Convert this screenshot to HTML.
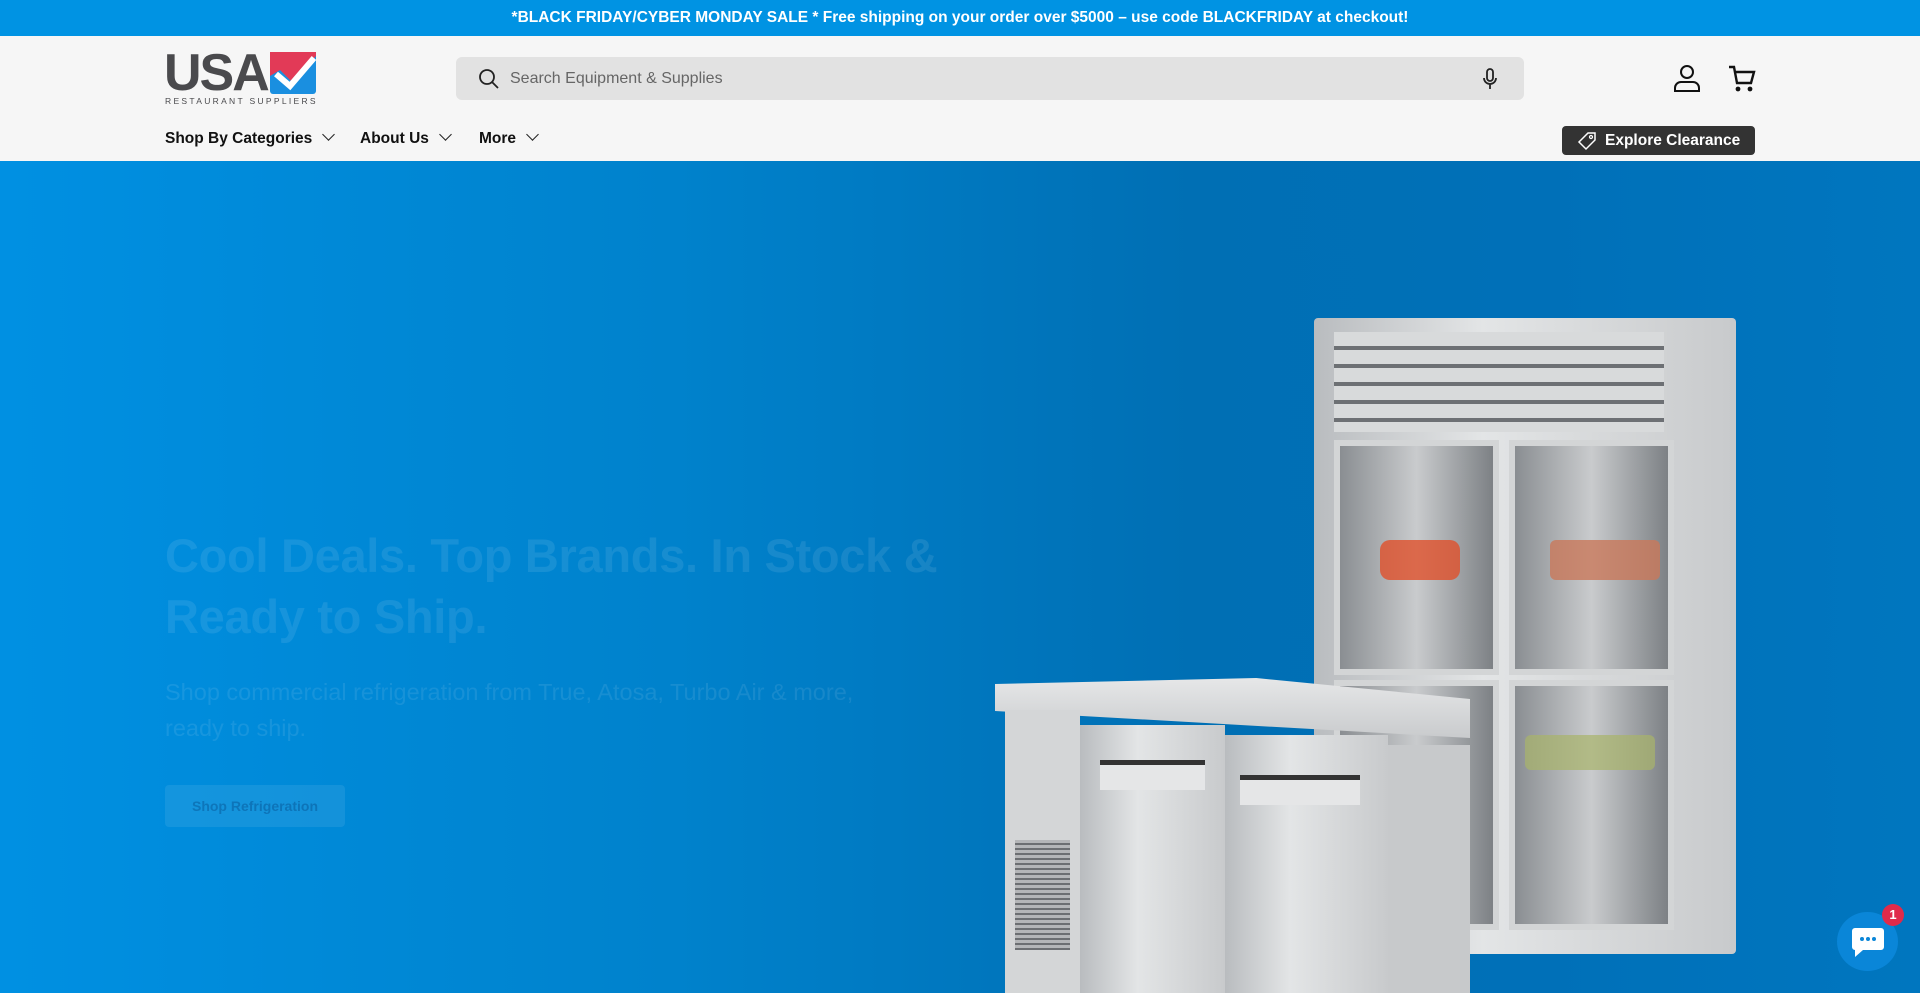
<!DOCTYPE html>
<html><head><meta charset="utf-8"><style>
*{margin:0;padding:0;box-sizing:border-box}
body{width:1920px;height:993px;overflow:hidden;font-family:"Liberation Sans",sans-serif;background:#0088d6;position:relative}
.top{height:36px;background:#0093e3;color:#fff;font-weight:bold;font-size:15.5px;text-align:center;line-height:36px}
.hdr{position:absolute;top:36px;left:0;width:1920px;height:125px;background:#f6f6f6}
.hero{position:absolute;top:161px;left:0;width:1920px;height:832px;background:linear-gradient(90deg,#0090e2 0%,#0082cc 35%,#006fb4 62%,#0070b8 80%,#0076bf 100%)}
.abs{position:absolute}
.nav{position:absolute;top:130px;font-size:15.5px;font-weight:bold;color:#111}
.chev{display:inline-block;width:9px;height:9px;border-right:1.6px solid #222;border-bottom:1.6px solid #222;transform:rotate(45deg);margin-left:12px;position:relative;top:-4px}
.steel{background:linear-gradient(90deg,#b9bcbf,#e3e5e6 40%,#c8cacc)}
</style></head><body>
<div class="top">*BLACK FRIDAY/CYBER MONDAY SALE * Free shipping on your order over $5000 – use code BLACKFRIDAY at checkout!</div>
<div class="hdr"></div>
<!-- logo -->
<div class="abs" style="left:164px;top:48px;font-size:52px;font-weight:bold;color:#4a4a4d;letter-spacing:-2px;line-height:50px">USA</div>
<svg class="abs" style="left:270px;top:52px" width="46" height="42" viewBox="0 0 46 42"><rect width="46" height="42" rx="3" fill="#1a8fe0"/><polygon points="0,0 46,0 46,4 22,30 10,18 0,24" fill="#e23a57"/><polyline points="6,22 20,34 44,6" fill="none" stroke="#fff" stroke-width="6"/></svg>
<div class="abs" style="left:165px;top:96px;font-size:8.5px;letter-spacing:2.3px;color:#4a4a4d">RESTAURANT SUPPLIERS</div>
<!-- search -->
<div class="abs" style="left:456px;top:57px;width:1068px;height:43px;background:#e2e2e2;border-radius:6px"></div>
<svg class="abs" style="left:478px;top:68px" width="22" height="22" viewBox="0 0 22 22"><circle cx="9" cy="9" r="7" fill="none" stroke="#222" stroke-width="1.8"/><line x1="14" y1="14" x2="20" y2="20" stroke="#222" stroke-width="1.8"/></svg>
<div class="abs" style="left:510px;top:70px;font-size:16px;color:#666">Search Equipment &amp; Supplies</div>
<svg class="abs" style="left:1480px;top:67px" width="20" height="24" viewBox="0 0 20 24"><rect x="7" y="2" width="6" height="12" rx="3" fill="none" stroke="#222" stroke-width="1.8"/><path d="M4 11a6 6 0 0 0 12 0M10 17v5" fill="none" stroke="#222" stroke-width="1.8"/></svg>
<svg class="abs" style="left:1672px;top:63px" width="30" height="30" viewBox="0 0 30 30"><circle cx="15" cy="9" r="6" fill="none" stroke="#111" stroke-width="2"/><path d="M3 28v-3a6 6 0 0 1 6-6h12a6 6 0 0 1 6 6v3z" fill="none" stroke="#111" stroke-width="2"/></svg>
<svg class="abs" style="left:1728px;top:65px" width="28" height="28" viewBox="0 0 28 28"><path d="M1 2h5l3 16h14l3-11H8" fill="none" stroke="#111" stroke-width="2.4"/><circle cx="10" cy="24" r="2.4" fill="#111"/><circle cx="22" cy="24" r="2.4" fill="#111"/></svg>
<div class="nav" style="left:165px">Shop By Categories<span class="chev"></span></div>
<div class="nav" style="left:360px">About Us<span class="chev"></span></div>
<div class="nav" style="left:479px">More<span class="chev"></span></div>
<div class="abs" style="left:1562px;top:126px;width:193px;height:29px;background:#333;border-radius:4px;color:#fff;font-size:15.5px;font-weight:bold;line-height:29px;padding-left:43px;white-space:nowrap">Explore Clearance</div>
<svg class="abs" style="left:1577px;top:131px" width="20" height="20" viewBox="0 0 20 20"><path d="M11 2h7v7l-9 9-7-7z" fill="none" stroke="#fff" stroke-width="1.5"/><circle cx="14" cy="6" r="1.5" fill="none" stroke="#fff" stroke-width="1.2"/></svg>
<div class="hero"></div>
<div class="abs" style="left:165px;top:525px;font-size:47px;font-weight:bold;color:rgba(255,255,255,0.09);line-height:61px;white-space:nowrap;letter-spacing:-0.3px">Cool Deals. Top Brands. In Stock &amp;<br>Ready to Ship.</div>
<div class="abs" style="left:165px;top:674px;font-size:23.5px;color:rgba(255,255,255,0.09);line-height:36px;white-space:nowrap">Shop commercial refrigeration from True, Atosa, Turbo Air &amp; more,<br>ready to ship.</div>
<div class="abs" style="left:165px;top:785px;width:180px;height:42px;background:rgba(255,255,255,0.08);border-radius:4px;color:rgba(0,60,120,0.35);font-size:14px;font-weight:bold;text-align:center;line-height:42px">Shop Refrigeration</div>
<!-- tall fridge -->
<div class="abs steel" style="left:1314px;top:318px;width:422px;height:636px;border-radius:4px"></div>
<div class="abs" style="left:1334px;top:332px;width:330px;height:100px;background:repeating-linear-gradient(180deg,#d8dadb 0 14px,#6d7074 14px 18px)"></div>
<div class="abs" style="left:1334px;top:440px;width:340px;height:235px;display:flex;gap:10px"><div style="flex:1;background:linear-gradient(90deg,#8a8e92,#c9cbcd,#7d8185);border:6px solid #d3d5d6"></div><div style="flex:1;background:linear-gradient(90deg,#8a8e92,#c9cbcd,#7d8185);border:6px solid #d3d5d6"></div></div>
<div class="abs" style="left:1334px;top:680px;width:340px;height:250px;display:flex;gap:10px"><div style="flex:1;background:linear-gradient(90deg,#8a8e92,#c9cbcd,#7d8185);border:6px solid #d3d5d6"></div><div style="flex:1;background:linear-gradient(90deg,#8a8e92,#c9cbcd,#7d8185);border:6px solid #d3d5d6"></div></div>
<div class="abs" style="left:1380px;top:540px;width:80px;height:40px;background:#e0502a;border-radius:10px;opacity:.8"></div>
<div class="abs" style="left:1550px;top:540px;width:110px;height:40px;background:#c9785a;border-radius:6px;opacity:.8"></div>
<div class="abs" style="left:1525px;top:735px;width:130px;height:35px;background:#a8b36a;border-radius:6px;opacity:.7"></div>
<!-- undercounter -->
<div class="abs" style="left:995px;top:678px;width:475px;height:60px;background:linear-gradient(180deg,#e6e7e8,#c9cbcd);clip-path:polygon(0 10%,55% 0,100% 35%,100% 100%,0 55%);"></div>
<div class="abs" style="left:1005px;top:710px;width:75px;height:283px;background:#d4d6d7"></div>
<div class="abs" style="left:1015px;top:840px;width:55px;height:110px;background:repeating-linear-gradient(180deg,#b4b6b8 0 3px,#6c6f72 3px 5px)"></div>
<div class="abs steel" style="left:1080px;top:725px;width:145px;height:268px"></div>
<div class="abs steel" style="left:1225px;top:735px;width:163px;height:258px"></div>
<div class="abs" style="left:1388px;top:745px;width:82px;height:248px;background:#c7c9cb"></div>
<div class="abs" style="left:1100px;top:760px;width:105px;height:30px;background:linear-gradient(#333 0 5px,#e5e6e7 5px)"></div>
<div class="abs" style="left:1240px;top:775px;width:120px;height:30px;background:linear-gradient(#333 0 5px,#e5e6e7 5px)"></div>
<!-- chat -->
<div class="abs" style="left:1837px;top:912px;width:61px;height:59px;background:#0a86d8;border-radius:50%"></div>
<svg class="abs" style="left:1851px;top:926px" width="34" height="32" viewBox="0 0 34 32"><path d="M4 2h26a3 3 0 0 1 3 3v16a3 3 0 0 1-3 3H12l-8 7v-7a3 3 0 0 1-3-3V5a3 3 0 0 1 3-3z" fill="#fff"/><circle cx="11" cy="13" r="2" fill="#0a86d8"/><circle cx="17" cy="13" r="2" fill="#0a86d8"/><circle cx="23" cy="13" r="2" fill="#0a86d8"/></svg>
<div class="abs" style="left:1882px;top:904px;width:22px;height:22px;background:#e02a4a;border-radius:50%;color:#fff;font-size:13px;font-weight:bold;text-align:center;line-height:22px">1</div>
</body></html>
